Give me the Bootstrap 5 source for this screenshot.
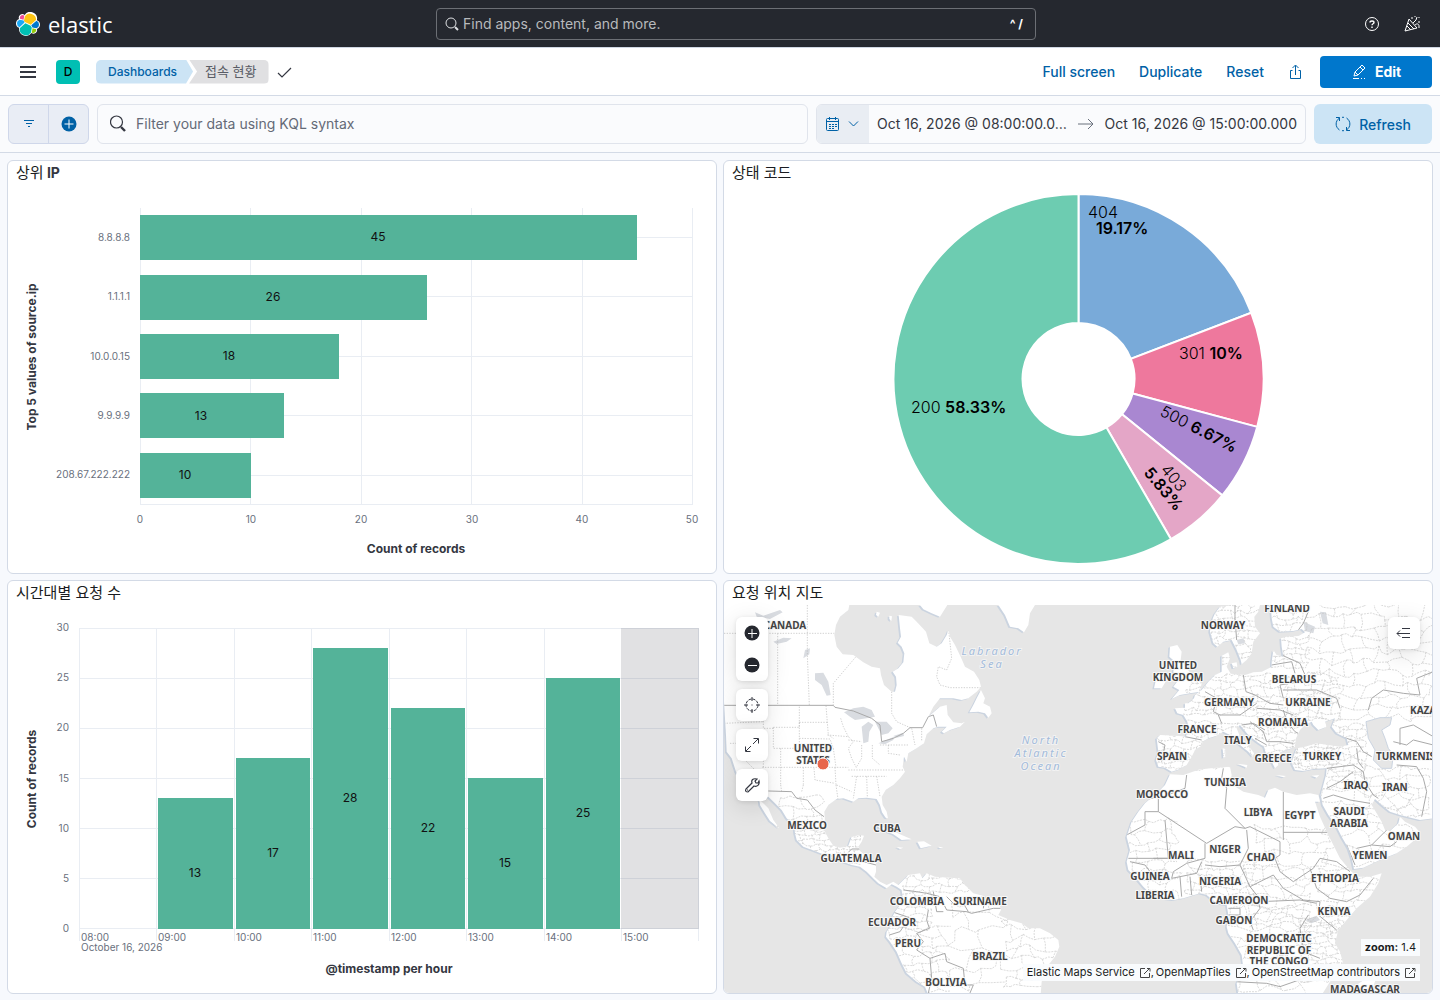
<!DOCTYPE html>
<html lang="ko">
<head>
<meta charset="utf-8">
<meta name="viewport" content="width=device-width, initial-scale=1">
<title>접속 현황 - Elastic</title>
<link href="https://cdn.jsdelivr.net/npm/bootstrap@5.3.0/dist/css/bootstrap.min.css" rel="stylesheet">
<style>
body{font-family:Inter,"Noto Sans CJK KR",sans-serif;font-size:14px;line-height:20px;color:#343741;background:#f7f9fd}
svg{display:block;flex-shrink:0}
.topbar{background:#25282f;height:48px;border-bottom:1px solid #d3dae6}
.wordmark{font-family:"Open Sans",sans-serif;font-size:22px;font-weight:400;line-height:32px;color:#fff}
.finder{width:600px;height:32px;border:1px solid #6c6f75;border-radius:4px;color:#fff}
.finder input,.kql input{background:none;border:0;outline:0;min-width:0;font-size:14px}
.finder input{color:#fff}
.finder input::placeholder{color:#b8babd;opacity:1}
.keys{font-size:12px;font-weight:700}
.iconbtn{width:40px;height:32px;display:flex;align-items:center;justify-content:center;padding:0;border:0;background:none}
.toolbar{height:48px;background:#fff;border-bottom:1px solid #d3dae6;box-shadow:0 1px 3px rgba(0,0,0,.08)}
.avatar{width:24px;height:24px;border-radius:4px;background:#00bfb3;color:#000;font-size:12px;font-weight:500}
.crumb{height:24px;font-size:12px;line-height:24px;text-decoration:none;font-weight:500}
.crumb-first{background:#cce4f5;color:#0061a6;padding:0 16px 0 12px;border-radius:5px 0 0 5px;clip-path:polygon(0 0,calc(100% - 7px) 0,100% 50%,calc(100% - 7px) 100%,0 100%)}
.crumb-last{background:#e0e0e2;color:#5a5d66;font-size:13px;line-height:22px;font-weight:400;padding:0 12px 0 16px;margin-left:-4px;border-radius:0 5px 5px 0;clip-path:polygon(0 0,100% 0,100% 100%,0 100%,8px 50%)}
.textbtn{color:#0061a6;font-weight:500;padding:0 12px;border:0;background:none;height:32px}
.editbtn{width:112px;height:32px;background:#07c;color:#fff;font-weight:700;border-radius:4px;padding:0;font-size:14px}
.querybar{background:#fafbfd;border-bottom:1px solid #d3dae6;padding:8px}
.ctl{height:40px;border:1px solid #e0e4ec;border-radius:6px;background:#fafbfd}
.filters{width:81px;background:#e9edf5;border-color:#cfd7ea;overflow:hidden}
.filters button{height:38px;width:39px}
.filters button+button{width:40px;border-left:1px solid #cfd7ea}
.kql input{color:#343741}
.kql input::placeholder{color:#646a77;opacity:1}
.dates{width:490px;overflow:hidden}
.quick{width:52px;height:38px;background:#e9edf3;border:0;padding:0 0 0 9px}
.dates .when{border:0;background:none;padding:0;color:#343741;white-space:nowrap}
.refresh{width:118px;height:40px;background:#cce4f5;color:#0061a6;font-weight:500;font-size:14px;border-radius:6px;padding:0}
.board{display:grid;grid-template-columns:minmax(0,1fr) minmax(0,1fr);gap:6px;padding:7px 7px 6px}
.panel{background:#fff;border:1px solid #d3dae6;border-radius:6px;overflow:hidden;position:relative}
.panel h2{font-size:14px;line-height:24px;font-weight:700;margin:0;padding:0 8px;color:#343741}
.panel h2 span{font-size:15px;font-weight:400;color:#1a1c21}
.plot{width:100%;height:auto}
.plot text{font-family:Inter,sans-serif}
.tick{font-size:10px;fill:#69707d}
.val{font-size:12px;fill:#111;text-anchor:middle}
.axis{font-size:12px;font-weight:700;fill:#343741;text-anchor:middle}
.grid{stroke:#e9edf3;fill:none}
.bars rect{fill:#54b399}
.pie path{stroke:#fff;stroke-width:2}
.pie text{font-size:16px;fill:#000;font-weight:300}
.pie .strong{font-weight:600}
.end{text-anchor:end}.mid{text-anchor:middle}
.plot .places text{font-family:"Noto Sans",sans-serif;font-size:10px;font-weight:700;fill:#444;text-anchor:middle;stroke:#f8f8f8;stroke-width:2;paint-order:stroke;stroke-linejoin:round}
.plot .seas text{font-family:"Noto Sans",sans-serif;font-size:11px;font-style:italic;fill:#a3bbdb;text-anchor:middle;stroke:#f2f2f2;stroke-width:2;paint-order:stroke;letter-spacing:2px}
.mapbody{position:relative}
.mapctl{position:absolute;top:12px;left:12px;width:32px;z-index:2}
.mapctl.layers{left:auto;right:12px}
.mapbox{background:#fff;border-radius:6px;box-shadow:0 1px 4px rgba(0,0,0,.1),0 5px 24px rgba(0,0,0,.12)}
.mapbox .iconbtn{width:32px}
.mapfoot{position:absolute;right:12px;bottom:12px;font-size:11px;line-height:17px}
.mapfoot>div{background:rgba(250,252,254,.94);color:#1a1c21}
.mapfoot a{color:#1a1c21;text-decoration:none}
.comma{margin-right:2px}
</style>
</head>
<body>
<header class="topbar d-flex align-items-center ps-3 pe-2">
  <a href="#" class="d-flex align-items-center gap-2 text-decoration-none me-4" style="flex:1 1 0" aria-label="elastic">
    <svg width="24" height="24" viewBox="0 0 32 32"><path fill="#fff" d="M32 16.800a6.300 6.300 0 0 0-4.100-5.900A9.100 9.100 0 0 0 11.500 3.900 4.800 4.800 0 0 0 4 9.300 6.300 6.300 0 0 0 0 15.200a6.300 6.300 0 0 0 4.200 5.900A9 9 0 0 0 4 22.800a9.100 9.100 0 0 0 16.500 5.300 4.800 4.800 0 0 0 7.400-5.400A6.300 6.300 0 0 0 32 16.800z"/><path fill="#fec514" d="m12.600 13.800 7 3.200 7.100-6.200a8 8 0 0 0-15-4.400l-1.200 6z"/><path fill="#00bfb3" d="M5.300 21.200a8 8 0 0 0 14.600 6l1.200-6.100-1.600-2.900-7-3.200z"/><path fill="#f04e98" d="m5.300 9 4.800 1.200 1-5.500A3.800 3.800 0 0 0 5.300 9z"/><path fill="#1ba9f5" d="M4.900 10.200a5.300 5.300 0 0 0-.2 10l6.700-6.100-1.200-2.700z"/><path fill="#93c90e" d="M21 27.200a3.800 3.800 0 0 0 5.800-4.200l-4.700-1.200z"/><path fill="#07c" d="m21.900 20.500 5.200 1.300a5.300 5.300 0 0 0 .2-10l-6.900 6z"/></svg>
    <span class="wordmark">elastic</span>
  </a>
  <label class="finder d-flex align-items-center px-2">
    <svg width="14" height="14" viewBox="0 0 14 14" fill="none" stroke="#dfe1e4"><circle cx="6" cy="6" r="5"/><path d="m10 10 3 3" stroke-width="2"/></svg>
    <input class="flex-grow-1 ms-1 p-0" type="text" placeholder="Find apps, content, and more." aria-label="Find apps, content, and more.">
    <span class="keys px-1">^ /</span>
  </label>
  <div class="d-flex justify-content-end" style="flex:1 1 0">
    <button class="iconbtn" aria-label="Help"><svg width="16" height="16" viewBox="0 0 16 16" fill="none" stroke="#fff"><circle cx="8" cy="8" r="6.500"/><path d="M6 6.500C6 4.500 10 4.500 10 6.500 10 8 8 7.500 8 9.200M8 10.500v1.500" stroke-width="1.400"/></svg></button>
    <button class="iconbtn" aria-label="What's new"><svg width="18" height="18" viewBox="0 0 18 18" fill="none" stroke="#fff"><path d="m2 16 4-12 8 9zM4 11l4 4M5 8l6 6M10 8l3-3 1-3M12 10c2-2 4-1 4 1v2M9 2v2M16 2v1M15 7h2M12 1v1"/></svg></button>
  </div>
</header>
<nav class="toolbar d-flex align-items-center px-2" aria-label="Dashboard">
  <button class="iconbtn" aria-label="Menu"><svg width="16" height="16" fill="#343741"><path d="M0 2h16v2H0zM0 7h16v2H0zM0 12h16v2H0z"/></svg></button>
  <div class="avatar d-flex align-items-center justify-content-center ms-2 me-3">D</div>
  <a class="crumb crumb-first" href="#">Dashboards</a><span class="crumb crumb-last">접속 현황</span>
  <svg class="ms-2" width="16" height="16" viewBox="0 0 16 16" fill="none" stroke="#343741" stroke-width="1.200"><path d="m1 9 4 4 9-9"/></svg>
  <div class="d-flex align-items-center ms-auto">
    <button class="textbtn">Full screen</button><button class="textbtn">Duplicate</button><button class="textbtn">Reset</button>
    <button class="iconbtn me-1" aria-label="Share"><svg width="16" height="16" viewBox="0 0 16 16" fill="none" stroke="#0061a6"><path d="M4.500 6.500h-2v8h10v-8h-2M7.500 11V1.500M4.500 4l3-3 3 3"/></svg></button>
    <button class="btn editbtn d-flex align-items-center justify-content-center gap-2"><svg width="16" height="16" viewBox="0 0 16 16" fill="none" stroke="#fff"><path d="m3 12 1-4 7-7 3 3-7 7-4 1zM9 3l3 3M4 8l3 3M2 14.500h6M10 14.500h1M13 14.500h1"/></svg>Edit</button>
  </div>
</nav>
<section class="querybar d-flex gap-2">
  <div class="ctl filters d-flex">
    <button class="iconbtn" aria-label="Filters"><svg width="12" height="12" fill="none" stroke="#0061a6"><path d="M1 2.500h10M3 5.500h6M5 8.500h2"/></svg></button>
    <button class="iconbtn" aria-label="Add filter"><svg width="16" height="16" viewBox="0 0 16 16"><circle cx="8" cy="8" r="7.500" fill="#0061a6"/><path d="M8 3.500v9M3.500 8h9" stroke="#fff"/></svg></button>
  </div>
  <label class="ctl kql d-flex align-items-center flex-grow-1 px-2">
    <svg class="ms-1" width="18" height="18" viewBox="0 0 18 18" fill="none" stroke="#343741" stroke-width="1.200"><circle cx="6.500" cy="7" r="6"/><path d="m11 12 4 4" stroke-width="2.400"/></svg>
    <input class="flex-grow-1 ms-2 p-0" type="text" placeholder="Filter your data using KQL syntax" aria-label="Filter your data using KQL syntax">
  </label>
  <div class="ctl dates d-flex align-items-center">
    <button class="quick d-flex align-items-center gap-2" aria-label="Date quick select"><svg width="14" height="16" viewBox="0 0 14 16" fill="none" stroke="#0061a6"><rect x=".5" y="2.500" width="12" height="12" rx="1"/><path d="M.5 5.500h12M3.500 1v3M9.500 1v3"/><path d="M3 8.500h8M3 10.500h8M3 12.500h6" stroke-dasharray="2 1"/></svg><svg width="11" height="8" fill="none" stroke="#0061a6"><path d="m1 1.500 4.500 4.500L10 1.500"/></svg></button>
    <div class="d-flex align-items-center justify-content-between flex-grow-1 px-2">
      <button class="when">Oct 16, 2026 @ 08:00:00.0…</button>
      <svg width="16" height="12" fill="none" stroke="#69707d"><path d="M0 6h15M10 1l5 5-5 5"/></svg>
      <button class="when">Oct 16, 2026 @ 15:00:00.000</button>
    </div>
  </div>
  <button class="btn refresh d-flex align-items-center justify-content-center gap-2"><svg width="16" height="16" viewBox="0 0 16 16" fill="none" stroke="#0061a6"><path d="M1 1.500h3.500V5M4.500 2C0 5 0 11 4.500 14M7 14.700h2M15 14.500h-3.500V11M11.500 14c4.500-3 4.500-9 0-12M7 1.300h2"/></svg>Refresh</button>
</section>
<main class="board">
  <section class="panel">
    <h2><span>상위</span> IP</h2>
    <svg class="plot" viewBox="8 185 708 388" role="img" aria-label="상위 IP">
      <path class="grid" d="M140.500 208v297M250.500 208v297M361.500 208v297M471.500 208v297M582.500 208v297M692.500 208v297M140 504.500h553M140 237.500h552M140 296.500h552M140 356.500h552M140 415.500h552M140 475.500h552"/>
      <g class="bars"><rect x="140" y="215" width="497" height="45"/><rect x="140" y="275" width="287" height="45"/><rect x="140" y="334" width="199" height="45"/><rect x="140" y="393" width="144" height="45"/><rect x="140" y="453" width="111" height="45"/></g>
      <g class="val"><text x="378" y="241">45</text><text x="273" y="301">26</text><text x="229" y="360">18</text><text x="201" y="420">13</text><text x="185" y="479">10</text></g>
      <g class="tick end"><text x="130" y="241">8.8.8.8</text><text x="130" y="300">1.1.1.1</text><text x="130" y="360">10.0.0.15</text><text x="130" y="419">9.9.9.9</text><text x="130" y="478">208.67.222.222</text></g>
      <g class="tick mid"><text x="140" y="523">0</text><text x="251" y="523">10</text><text x="361" y="523">20</text><text x="472" y="523">30</text><text x="582" y="523">40</text><text x="692" y="523">50</text></g>
      <text class="axis" x="416" y="553">Count of records</text>
      <text class="axis" transform="translate(36 357) rotate(-90)">Top 5 values of source.ip</text>
    </svg>
  </section>
  <section class="panel">
    <h2><span>상태 코드</span></h2>
    <svg class="plot pie" viewBox="724 185 708 388" role="img" aria-label="상태 코드">
      <path fill="#79aad9" d="M1078.500 194A185 185 0 0 1 1251.200 312.700L1130.800 358.900A56 56 0 0 0 1078.500 323z"/>
      <path fill="#ee789d" d="M1251.200 312.700A185 185 0 0 1 1257.200 426.900L1132.600 393.500A56 56 0 0 0 1130.800 358.900z"/>
      <path fill="#a987d1" d="M1257.200 426.900A185 185 0 0 1 1222.300 495.400L1122 414.200A56 56 0 0 0 1132.600 393.500z"/>
      <path fill="#e4a6c7" d="M1222.300 495.400A185 185 0 0 1 1171 539.200L1106.500 427.500A56 56 0 0 0 1122 414.200z"/>
      <path fill="#6dccb1" d="M1171 539.200A185 185 0 1 1 1078.500 194L1078.500 323A56 56 0 1 0 1106.500 427.500z"/>
      <text x="1088" y="218">404</text><text class="strong" x="1096" y="234">19.17%</text>
      <text x="1179" y="359">301 <tspan class="strong">10%</tspan></text>
      <text x="911" y="413">200 <tspan class="strong">58.33%</tspan></text>
      <text transform="translate(1159 415) rotate(27)">500 <tspan class="strong">6.67%</tspan></text>
      <text transform="translate(1160 470) rotate(50)">403</text>
      <text class="strong" transform="translate(1143 473) rotate(50)">5.83%</text>
    </svg>
  </section>
  <section class="panel">
    <h2><span>시간대별 요청 수</span></h2>
    <svg class="plot" viewBox="8 605 708 388" role="img" aria-label="시간대별 요청 수">
      <path class="grid" d="M79.500 628v313M156.500 628v313M234.500 628v313M311.500 628v313M389.500 628v313M466.500 628v313M544.500 628v313M621.500 929v12M698.500 628v313M79 628.500h620M79 678.500h620M79 728.500h620M79 778.500h620M79 828.500h620M79 878.500h620M79 928.500h620"/>
      <g class="bars"><rect x="158" y="798" width="75" height="131"/><rect x="236" y="758" width="74" height="171"/><rect x="313" y="648" width="75" height="281"/><rect x="391" y="708" width="74" height="221"/><rect x="468" y="778" width="75" height="151"/><rect x="546" y="678" width="74" height="251"/></g>
      <rect x="621" y="628" width="78" height="301" fill="#343741" fill-opacity=".15"/>
      <g class="val"><text x="195" y="877">13</text><text x="273" y="857">17</text><text x="350" y="802">28</text><text x="428" y="832">22</text><text x="505" y="867">15</text><text x="583" y="817">25</text></g>
      <g class="tick end"><text x="69" y="631">30</text><text x="69" y="681">25</text><text x="69" y="731">20</text><text x="69" y="782">15</text><text x="69" y="832">10</text><text x="69" y="882">5</text><text x="69" y="932">0</text></g>
      <g class="tick"><text x="81" y="941">08:00</text><text x="158" y="941">09:00</text><text x="236" y="941">10:00</text><text x="313" y="941">11:00</text><text x="391" y="941">12:00</text><text x="468" y="941">13:00</text><text x="546" y="941">14:00</text><text x="623" y="941">15:00</text><text x="81" y="951">October 16, 2026</text></g>
      <text class="axis" x="389" y="973">@timestamp per hour</text>
      <text class="axis" transform="translate(36 779) rotate(-90)">Count of records</text>
    </svg>
  </section>
  <section class="panel">
    <h2><span>요청 위치 지도</span></h2>
    <div class="mapbody">
    <svg class="plot" viewBox="724 605 708 388" role="img" aria-label="요청 위치 지도">
      <defs>
        <path id="land" d="M12 90H388L385 105 360 125 348 150 343 180 350 215 368 238 400 240 430 262 455 275 480 280 483 300 492 330 515 350 525 350 530 330 528 305 518 290 535 280 550 262 553 235 545 215 533 203 543 185 540 160 536 120 575 125 590 140 607 158 618 170 628 205 650 215 665 205 680 180 686 165 690 185 705 210 722 245 735 275 762 290 778 315 783 335 770 350 745 370 725 375 700 370 660 370 640 395 625 425 660 395 680 390 683 420 700 442 725 445 735 440 720 455 690 465 672 475 665 470 680 455 655 455 640 460 620 478 612 505 590 520 565 535 560 560 552 545 548 575 555 590 540 610 520 630 497 645 485 665 488 690 500 710 504 730 497 728 486 712 480 690 470 672 440 668 415 670 400 680 370 670 350 672 325 690 313 710 315 740 312 765 325 790 340 812 360 818 385 812 395 785 420 780 432 782 425 800 415 815 420 828 440 845 468 860 468 890 463 905 480 920 500 930 520 920 535 930 545 920 565 900 600 895 607 910 620 895 645 905 690 908 720 910 735 930 760 955 800 965 835 975 843 1005 835 1020 870 1035 905 1045 925 1060 960 1060 990 1075 1015 1095 1018 1115 1005 1145 985 1170 975 1190 965 1220 962 1260H625L615 1235 590 1220 560 1195 545 1165 530 1130 510 1100 498 1085 500 1070 510 1055 515 1030 525 1010 540 990 548 970 545 945 530 935 515 928 500 940 475 925 455 905 440 890 420 875 395 870 340 850 290 830 250 815 230 795 225 775 222 750 200 730 185 705 165 685 145 665 120 675 145 700 160 735 178 760 150 738 135 715 120 690 118 670 95 640 60 610 48 590 35 550 20 530 18 480 12 380z
        M783 345 770 370 760 390 748 412 775 410 795 415 805 428 815 415 810 395 790 385 795 370z
        M600 90H682L660 125 635 115 610 103zM835 90H945L930 115 925 150 912 172 895 160 870 155 855 120zM470 110l10 3-5 12-7-5zM508 122l8 2-2 14-6-6z
        M470 748 510 765 540 778 575 793 545 795 520 778 480 762zM592 800 612 799 635 812 602 820zM530 816 550 818 540 822zM655 815 670 817 660 820z
        M1535 90 1500 95 1485 115 1472 145 1470 170 1480 205 1492 215 1510 200 1535 195 1550 225 1562 255 1565 268 1580 255 1595 235 1600 200 1620 175 1605 155 1603 125 1615 110 1620 90z
        M1652 90 1655 130 1660 155 1680 170 1720 168 1745 162 1755 172 1735 183 1700 185 1683 190 1685 215 1690 245 1670 240 1660 225 1655 260 1655 275 1625 290 1600 292 1575 300 1550 298 1532 296 1520 275 1530 250 1525 232 1505 242 1505 290 1485 300 1465 320 1445 345 1425 360 1422 370 1405 385 1395 385 1395 398 1365 400 1372 415 1390 420 1402 440 1405 455 1398 485 1370 482 1320 480 1310 490 1315 530 1308 555 1315 575 1335 578 1355 590 1380 582 1400 570 1415 545 1425 525 1445 512 1448 500 1465 490 1490 482 1510 470 1530 480 1560 510 1585 530 1598 545 1602 535 1580 505 1560 485 1550 460 1560 450 1570 462 1585 480 1610 500 1632 515 1640 545 1655 560 1665 580 1675 570 1670 545 1685 530 1715 520 1725 515 1728 490 1740 465 1755 450 1775 440 1780 450 1795 465 1820 455 1815 440 1845 430 1835 455 1850 475 1880 490 1885 510 1860 515 1825 510 1790 505 1755 515 1730 520 1720 545 1715 565 1725 585 1750 588 1780 582 1820 580 1818 600 1810 630 1802 660 1808 690 1825 720 1850 755 1865 785 1885 820 1895 850 1902 882 1930 878 1980 855 2030 835 2060 815 2090 790 2098 770 2085 755 2055 740 2040 725 2035 745 2010 768 1995 765 1985 740 1970 715 1955 690 1965 672 1985 690 2010 710 2040 720 2060 725 2100 735 2140 730V90z
        M1350 598 1390 600 1440 583 1490 578 1530 575 1535 600 1530 625 1570 650 1615 660 1635 668 1645 645 1665 638 1690 650 1730 660 1770 655 1795 660 1800 680 1785 680 1800 725 1825 780 1845 820 1860 850 1885 880 1895 890 1910 905 1950 905 1985 895 1975 925 1950 965 1910 1000 1880 1035 1855 1065 1845 1105 1860 1130 1868 1160 1860 1190 1830 1220 1805 1260H1555L1550 1225 1570 1180 1565 1140 1545 1105 1525 1075 1520 1055 1525 1020 1520 990 1490 985 1460 960 1440 955 1390 970 1360 975 1320 970 1290 955 1270 935 1245 905 1225 885 1220 860 1230 825 1220 785 1235 740 1255 710 1275 685 1315 650 1335 630z
        M1350 215 1372 210 1385 230 1382 255 1400 280 1420 305 1445 325 1440 350 1410 355 1380 360 1355 372 1378 345 1360 335 1375 315 1360 290 1365 260 1348 245zM1325 290 1340 315 1325 340 1302 340 1310 305z
        M1508 520 1516 522 1516 545 1510 548zM1552 566 1582 570 1580 578zM1668 600 1698 603 1690 607zM1775 602 1798 600 1790 608zM1535 265 1550 262 1552 275 1540 280zM1950 1203 1972 1198 1960 1235 1935 1260H1905L1900 1235z"/>
        <clipPath id="coast"><use href="#land"/></clipPath>
      </defs>
      <rect x="724" y="605" width="708" height="388" fill="#e6e6e6"/>
      <g transform="translate(720 575) scale(.33333)">
        <use href="#land" fill="#cbd4e0" transform="translate(-5 3)"/>
        <use href="#land" fill="#fff"/>
        <g clip-path="url(#coast)" fill="none">
          <path fill="#d9dce1" d="M105 112 130 122 180 105 188 112 150 132 110 125zM160 200 190 188 215 190 200 200 170 207zM250 250 255 225 270 220 268 238zM285 295 310 293 325 320 332 360 320 362 305 330 285 315zM372 412 400 400 430 395 455 405 465 425 440 430 405 435 390 425zM425 455 445 440 460 450 448 470 445 500 430 505zM465 440 500 440 518 460 505 475 485 480zM475 505 500 495 522 485 520 495 495 508zM520 483 550 473 552 483 530 488zM1750 140 1785 155 1780 175 1755 168zM1800 110 1818 112 1825 150 1808 145zM1755 1035 1790 1022 1800 1035 1775 1045zM1550 195 1570 190 1575 205 1555 208z"/>
          <g id="mesh" stroke="#c9c9c9" stroke-width="2" stroke-dasharray="6 3"></g>
          <path fill="#e6e6e6" stroke="#cbd4e0" stroke-width="3" d="M1938 440 1980 428 2015 428 2010 450 1985 465 1995 490 2005 520 2020 540 2015 580 1985 580 1960 555 1965 525 1945 490z"/>
          <path stroke="#b9b9b9" stroke-width="2" stroke-dasharray="4 4" d="M12 175H343M173 175V390M262 90V240L268 390M408 245 340 325V390M515 350V415L530 440 575 460M686 165 695 250 680 285 655 275 650 305 660 330 690 338H783M130 390V460H160M160 457H238V392M238 442H322M318 392 325 480 340 490M160 457V520H238M238 442V520M238 490 330 492 340 520M182 520V630M12 445 130 440M30 505H130V577M127 577H385M250 577V630M282 580 285 615 345 625M345 577 348 630M340 520 348 577M322 480 385 485 400 500 385 520 395 550 410 580M362 430 370 455 385 485M385 495 425 500M425 510V550L410 575M457 510V550L480 570M480 510H565M505 510V535L540 540M385 585H555M395 604H500M410 604 400 670M440 604 442 665M470 604 480 665M350 630 395 650M60 540 110 590M182 630 185 650M250 630 245 650M348 630 355 680M575 460 585 510M605 460V500"/>
          <path stroke="#a9a9a9" stroke-width="3" d="M12 391H340L345 397 400 408 455 430 480 450 485 500 520 490 550 475 570 458H608L625 425 640 420 650 455M145 648 215 650 230 670 262 675 285 705 312 725M385 832 395 822H425M430 860 468 870M550 945 590 950 620 955 660 965 680 1005 740 1010 755 1015 820 1000 842 1000M625 1005 620 1035 628 1060 590 1075 610 1100 590 1125 630 1150 675 1135 680 1160 730 1180 735 1230 760 1230 750 1254M515 1010 560 1025 590 1040M508 1080 540 1070 550 1055M680 965 700 985 730 985 745 1010M795 965 790 1000M630 1150 635 1210 625 1254M670 1010 650 1010 640 950
          M1545 90V130L1550 195M1765 110 1750 145 1735 165M1655 270 1715 260 1725 295M1570 300 1578 350 1605 360 1650 385 1690 390M1685 240 1740 265 1755 300 1740 320 1680 330 1690 370M1690 345 1790 345 1850 370 1860 400M1455 350 1490 370 1480 410 1500 420 1560 420 1610 385M1495 420 1505 445M1395 485 1445 495M1315 500 1335 510 1325 560M1590 440 1630 470 1640 500 1680 500 1720 505M1610 400 1680 405 1720 420M1690 405 1700 440 1725 470 1735 475M1565 450 1600 445 1635 465M1605 490 1640 510M1945 405 1955 370 1990 345 2050 355 2100 360 2090 310 2140 290M2040 510V460L2080 450 2140 485M2020 500 2060 510 2080 495 2140 510M1850 480 1910 500 1930 530 1955 545M1910 520 1915 560 1930 580M1820 580 1900 570 1930 590 1935 620 1960 660 1975 670M2030 570 2090 575 2110 610 2120 650 2105 725M1820 640 1860 620 1900 590M1810 670 1840 660 1890 675 1950 685M1400 600 1395 640 1315 670V710L1460 805 1545 755 1575 760 1515 700 1520 640 1505 610 1510 580M1315 665 1275 675M1315 710H1275V750L1220 780M1335 735 1345 850H1225M1455 805V850L1400 865M1575 760 1590 755 1680 800V840L1665 850 1680 890M1690 650V795M1690 772H1825M1580 765 1585 820 1560 870 1500 875 1455 870M1345 850 1300 850M1230 860 1275 870 1290 890M1400 865 1360 890 1355 910 1430 895 1445 860M1380 905 1385 965M1410 905 1415 960M1440 900 1445 950M1560 870 1590 935 1610 960 1560 990M1590 935 1660 900 1690 940 1750 975 1800 980M1680 890 1720 920 1780 880 1800 850 1850 860 1890 890M1770 880 1790 940 1830 970 1880 980 1920 960 1960 910M1610 960 1620 1000 1590 1040 1600 1065M1620 980 1740 975 1790 985M1800 980 1795 1020 1850 1065M1740 1060 1750 1130 1800 1150M1545 1220 1640 1225 1680 1235 1780 1200M1765 1020 1740 1060M1525 1000H1560V1020H1525M2025 742 1995 770 1955 810 1910 820M1955 810 2010 815 2030 800M1880 810 1905 870"/>
        </g>
      </g>
      <g class="seas"><text x="992" y="655">Labrador</text><text x="992" y="668">Sea</text><text x="1041" y="744">North</text><text x="1041" y="757">Atlantic</text><text x="1041" y="770">Ocean</text></g>
      <g class="places"><text x="785" y="629">CANADA</text><text x="813" y="752">UNITED</text><text x="813" y="764">STATES</text><text x="807" y="829">MEXICO</text><text x="887" y="832">CUBA</text><text x="851" y="862">GUATEMALA</text><text x="917" y="905">COLOMBIA</text><text x="980" y="905">SURINAME</text><text x="892" y="926">ECUADOR</text><text x="908" y="947">PERU</text><text x="990" y="960">BRAZIL</text><text x="946" y="986">BOLIVIA</text><text x="1287" y="612">FINLAND</text><text x="1223" y="629">NORWAY</text><text x="1178" y="669">UNITED</text><text x="1178" y="681">KINGDOM</text><text x="1294" y="683">BELARUS</text><text x="1229" y="706">GERMANY</text><text x="1308" y="706">UKRAINE</text><text x="1197" y="733">FRANCE</text><text x="1283" y="726">ROMANIA</text><text x="1238" y="744">ITALY</text><text x="1172" y="760">SPAIN</text><text x="1273" y="762">GREECE</text><text x="1322" y="760">TURKEY</text><text x="1225" y="786">TUNISIA</text><text x="1356" y="789">IRAQ</text><text x="1395" y="791">IRAN</text><text x="1162" y="798">MOROCCO</text><text x="1258" y="816">LIBYA</text><text x="1300" y="819">EGYPT</text><text x="1349" y="815">SAUDI</text><text x="1349" y="827">ARABIA</text><text x="1404" y="840">OMAN</text><text x="1370" y="859">YEMEN</text><text x="1225" y="853">NIGER</text><text x="1181" y="859">MALI</text><text x="1261" y="861">CHAD</text><text x="1150" y="880">GUINEA</text><text x="1220" y="885">NIGERIA</text><text x="1335" y="882">ETHIOPIA</text><text x="1155" y="899">LIBERIA</text><text x="1239" y="904">CAMEROON</text><text x="1334" y="915">KENYA</text><text x="1234" y="924">GABON</text><text x="1279" y="942">DEMOCRATIC</text><text x="1279" y="954">REPUBLIC OF</text><text x="1279" y="965">THE CONGO</text><text x="1365" y="993">MADAGASCAR</text><text x="1410" y="714" style="text-anchor:start">KAZA</text><text x="1376" y="760" style="text-anchor:start">TURKMENIS</text></g>
      <circle cx="823" cy="764" r="6" fill="#e7664c" stroke="#fff"/>
    </svg>
    <div class="mapctl d-flex flex-column gap-2">
      <div class="mapbox">
        <button class="iconbtn" aria-label="Zoom in"><svg width="16" height="16"><circle cx="8" cy="8" r="7.500" fill="#25282f"/><path d="M8 4v9M4 8.500h9" stroke="#fff"/></svg></button>
        <button class="iconbtn" aria-label="Zoom out"><svg width="16" height="16"><circle cx="8" cy="8" r="7.500" fill="#25282f"/><path d="M4 8.500h9" stroke="#fff"/></svg></button>
      </div>
      <div class="mapbox"><button class="iconbtn" aria-label="Fit to data"><svg width="16" height="16" fill="none" stroke="#343741"><circle cx="8" cy="8" r="6" stroke-dasharray="3 1"/><path d="M8 0v4M8 12v4M0 8h4M12 8h4M7.500 8h1"/></svg></button></div>
      <div class="mapbox"><button class="iconbtn" aria-label="Full screen"><svg width="16" height="16" fill="none" stroke="#343741"><path d="M9.500 1.500h5v5M14 2 9 7M6.500 14.500h-5v-5M2 14l5-5"/></svg></button></div>
      <div class="mapbox"><button class="iconbtn" aria-label="Tools"><svg width="16" height="16" fill="none" stroke="#343741" stroke-width="1.200"><path d="m2 12 6-6c-1-3 1-5 5-4l-2 2 1 2 2 0 1-2c1 4-2 6-5 5l-6 6c-2 0-3-1-2-3zM3 13h1"/></svg></button></div>
    </div>
    <div class="mapctl layers"><div class="mapbox"><button class="iconbtn" aria-label="Layers"><svg width="16" height="16" fill="none" stroke="#343741"><path d="M6 3.500h8M1 8.500h13M6 12.500h8M4 5.500l-3 3 3 3"/></svg></button></div></div>
    <div class="mapfoot d-flex flex-column align-items-end gap-2">
      <div class="px-1"><b>zoom:</b> 1.4</div>
      <div class="d-flex align-items-center px-1">
        <a href="#" class="d-flex align-items-center gap-1">Elastic Maps Service <svg width="12" height="12" fill="none" stroke="#444"><path d="M6 1.500H1.500v9h9V6M8 1.500h3v3M5 7l5-5"/></svg></a><span class="comma">,</span>
        <a href="#" class="d-flex align-items-center gap-1">OpenMapTiles <svg width="12" height="12" fill="none" stroke="#444"><path d="M6 1.500H1.500v9h9V6M8 1.500h3v3M5 7l5-5"/></svg></a><span class="comma">,</span>
        <a href="#" class="d-flex align-items-center gap-1">OpenStreetMap contributors <svg width="12" height="12" fill="none" stroke="#444"><path d="M6 1.500H1.500v9h9V6M8 1.500h3v3M5 7l5-5"/></svg></a>
      </div>
    </div>
    </div>
  </section>
</main>
<script src="https://cdn.jsdelivr.net/npm/bootstrap@5.3.0/dist/js/bootstrap.bundle.min.js"></script>
<script>
// Province boundaries: an irregular mesh per region, [left, top, right, bottom, cell size].
const regions = [
  [1470,90,1620,270,20],[1655,90,1760,180,20],[1765,90,2140,440,34],[1655,185,1765,280,18],
  [1395,300,1700,420,20],[1700,300,1860,440,22],[1310,440,1610,590,20],[1610,420,1740,580,18],
  [1720,505,1860,590,13],[1820,450,1950,640,17],[1930,580,2140,730,28],[1820,650,2090,870,42],
  [1225,740,1400,980,30],[1400,860,1600,960,20],[1600,760,1860,900,38],[1580,880,1800,1050,28],
  [1800,880,1980,1080,24],[1525,1000,1780,1254,30],[1740,1040,1870,1220,16],
  [185,660,320,780,32],[225,765,430,870,15],[545,890,750,960,20],[510,960,640,1070,20],
  [500,1060,700,1254,26],[690,970,860,1254,52],[850,1030,1020,1254,30]
];
let seed = 7;
const rnd = () => (seed = (seed * 16807) % 2147483647) / 2147483647 - .5;
let d = '';
for (const [l, t, r, b, c] of regions) {
  const nx = Math.floor((r - l) / c), ny = Math.floor((b - t) / c), v = [];
  for (let i = 0; i <= nx; i++) {
    v.push([]);
    for (let j = 0; j <= ny; j++) v[i].push([l + i * c + rnd() * c * .8, t + j * c + rnd() * c * .8]);
  }
  const edge = (p, q) => {
    const mx = (p[0] + q[0]) / 2 + rnd() * c * .4, my = (p[1] + q[1]) / 2 + rnd() * c * .4;
    d += 'M' + [...p, mx, my, ...q].map(Math.round).join(' ');
  };
  for (let i = 0; i <= nx; i++) for (let j = 0; j <= ny; j++) {
    if (i < nx) edge(v[i][j], v[i + 1][j]);
    if (j < ny && (i + j) % 2 === 0) edge(v[i][j], v[i][j + 1]);
  }
}
const path = document.createElementNS('http://www.w3.org/2000/svg', 'path');
path.setAttribute('d', d);
document.getElementById('mesh').append(path);
</script>
</body>
</html>
